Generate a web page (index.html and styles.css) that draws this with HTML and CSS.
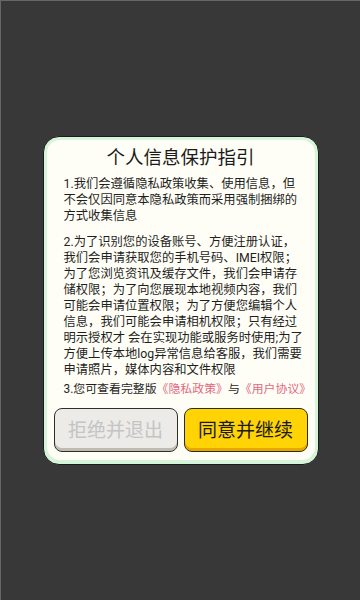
FILE: index.html
```html
<!DOCTYPE html>
<html lang="zh-CN">
<head>
<meta charset="utf-8">
<title>个人信息保护指引</title>
<link rel="stylesheet" href="styles.css">
</head>
<body>
<div class="screen">
  <div class="card">
    <div class="card-inner">
      <h1 class="title">个人信息保护指引</h1>
      <div class="body">
        <p class="para para-first">1.我们会遵循隐私政策收集、使用信息，但<br>不会仅因同意本隐私政策而采用强制捆绑的<br>方式收集信息</p>
        <p class="para">2.为了识别您的设备账号、方便注册认证，<br>我们会申请获取您的手机号码、IMEI权限；<br>为了您浏览资讯及缓存文件，我们会申请存<br>储权限；为了向您展现本地视频内容，我们<br>可能会申请位置权限；为了方便您编辑个人<br>信息，我们可能会申请相机权限；只有经过<br>明示授权才 会在实现功能或服务时使用;为了<br>方便上传本地log异常信息给客服，我们需要<br>申请照片，媒体内容和文件权限</p>
        <p class="para para-links">3.您可查看完整版<span class="link">《隐私政策》</span>与<span class="link">《用户协议》</span></p>
      </div>
      <div class="actions">
        <button class="btn btn-decline">拒绝并退出</button>
        <button class="btn btn-accept">同意并继续</button>
      </div>
    </div>
  </div>
</div>
</body>
</html>
```

FILE: styles.css
```css
html, body {
  margin: 0;
  padding: 0;
}

body {
  font-family: Roboto, "Noto Sans CJK SC", sans-serif;
  background: #383838;
}

.screen {
  box-sizing: border-box;
  width: 360px;
  height: 600px;
  background: #383838;
  border-top: 1px solid #676767;
  border-left: 1px solid #676767;
  display: flex;
  align-items: center;
  justify-content: center;
}

.card {
  box-sizing: border-box;
  width: 276px;
  border: 1px solid #1b1b1b;
  border-radius: 16px;
  background: #d6f4d9;
  padding: 3px 3px 4px;
}

.card-inner {
  background: #fefef6;
  border-radius: 13px;
  padding: 6px 7px 8px;
}

.title {
  margin: 0;
  text-align: center;
  font-size: 18.5px;
  line-height: 24px;
  font-weight: normal;
  color: #1a1a1a;
}

.body {
  padding: 6px 8px 0 10px;
  color: #1f1f1f;
  font-size: 12.3px;
  line-height: 16px;
}

.para {
  margin: 0;
  white-space: nowrap;
}

.para-first {
  margin-bottom: 10px;
}

.para-links {
  margin-top: 3px;
  font-size: 11.9px;
  line-height: 17px;
}

.link {
  color: #e2687f;
}

.actions {
  display: flex;
  gap: 6px;
  margin-top: 10px;
}

.btn {
  flex: 1;
  height: 44px;
  border-radius: 8px;
  font-family: Roboto, "Noto Sans CJK SC", sans-serif;
  font-size: 19px;
  padding: 0 0 3px;
  cursor: pointer;
}

.btn-decline {
  background: #ecebe8;
  color: #c4c4c4;
  border: 1px solid #2f2f2a;
  box-shadow: inset 0 -3px 0 #bfbbb2;
}

.btn-accept {
  background: #ffd304;
  color: #1a1a1a;
  border: 1px solid #2f2a12;
  box-shadow: inset 0 -3px 0 #e6a700;
}
```
